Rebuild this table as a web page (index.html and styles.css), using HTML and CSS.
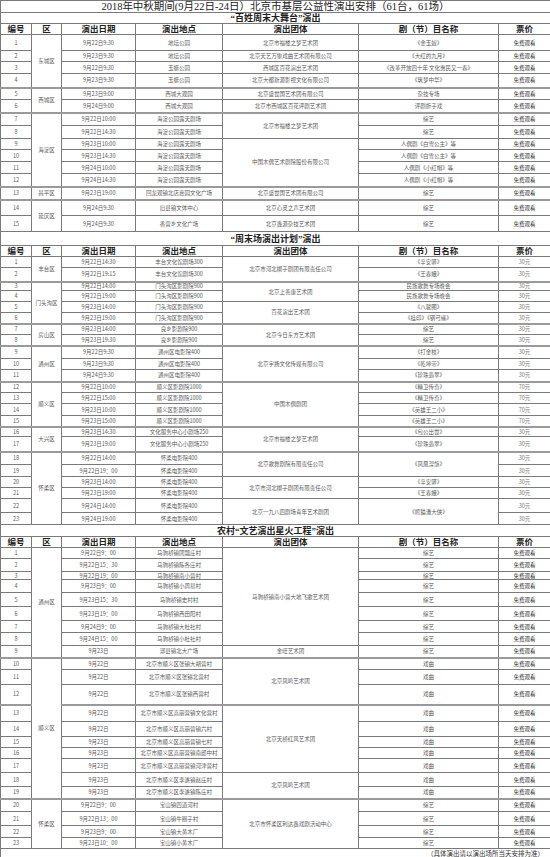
FILE: index.html
```html
<!DOCTYPE html>
<html lang="zh-CN">
<head>
<meta charset="utf-8">
<title>2018年中秋期间北京市基层公益性演出安排</title>
<link rel="stylesheet" href="styles.css">
</head>
<body>
<table class="t">
<colgroup>
<col class="c1"><col class="c2"><col class="c3"><col class="c4"><col class="c5"><col class="c6"><col class="c7">
</colgroup>
<tbody>
<tr class="h12"><td class="title" colspan="7">2018年中秋期间(9月22日-24日）北京市基层公益性演出安排（61台，61场）</td></tr>
<tr class="h11"><td class="sec" colspan="7">“百姓周末大舞台”演出</td></tr>
<tr class="h11 hd"><th>编号</th><th>区</th><th>演出日期</th><th>演出地点</th><th>演出团体</th><th>剧（节）目名称</th><th>票价</th></tr>

<tr class="h16"><td>1</td><td rowspan="4">东城区</td><td>9月22日9:30</td><td>地坛公园</td><td>北京市福楼之梦艺术团</td><td>《金玉奴》</td><td class="p">免费观看</td></tr>
<tr class="h11"><td>2</td><td>9月23日9:30</td><td>地坛公园</td><td>北京天艺万象戏曲艺术团有限公司</td><td>《大红的九月》</td><td class="p">免费观看</td></tr>
<tr class="h12"><td>3</td><td>9月22日9:30</td><td>玉蜓公园</td><td>西城区百花演出艺术团</td><td>《改革开放四十年 文化惠民又一春》</td><td class="p">免费观看</td></tr>
<tr class="h14"><td>4</td><td>9月23日9:30</td><td>玉蜓公园</td><td>北京大都新源影视文化有限公司</td><td>《筑梦中华》</td><td class="p">免费观看</td></tr>
<tr class="h12 g"><td>5</td><td rowspan="2">西城区</td><td>9月23日9:00</td><td>西城大观园</td><td>北京盛世国艺术团有限公司</td><td>杂技专场</td><td class="p">免费观看</td></tr>
<tr class="h13"><td>6</td><td>9月24日9:00</td><td>西城大观园</td><td>北京市西城区百花评剧艺术团</td><td>评剧折子戏</td><td class="p">免费观看</td></tr>
<tr class="h13 g"><td>7</td><td rowspan="6">海淀区</td><td>9月22日10:00</td><td>海淀公园露天剧场</td><td rowspan="2">北京市福楼之梦艺术团</td><td>综艺</td><td class="p">免费观看</td></tr>
<tr class="h13"><td>8</td><td>9月22日14:30</td><td>海淀公园露天剧场</td><td>综艺</td><td class="p">免费观看</td></tr>
<tr class="h11"><td>9</td><td>9月23日10:00</td><td>海淀公园露天剧场</td><td rowspan="4">中国木偶艺术剧院股份有限公司</td><td>人偶剧《白雪公主》等</td><td class="p">免费观看</td></tr>
<tr class="h12"><td>10</td><td>9月23日14:30</td><td>海淀公园露天剧场</td><td>人偶剧《白雪公主》等</td><td class="p">免费观看</td></tr>
<tr class="h12"><td>11</td><td>9月24日10:00</td><td>海淀公园露天剧场</td><td>人偶剧《小红帽》等</td><td class="p">免费观看</td></tr>
<tr class="h13"><td>12</td><td>9月24日14:30</td><td>海淀公园露天剧场</td><td>人偶剧《小红帽》等</td><td class="p">免费观看</td></tr>
<tr class="h13 g"><td>13</td><td>昌平区</td><td>9月23日19:00</td><td>回龙观镇北店嘉园文化广场</td><td>北京盛世国艺术团有限公司</td><td>综艺</td><td class="p">免费观看</td></tr>
<tr class="h16 g"><td>14</td><td rowspan="2">延庆区</td><td>9月24日9:30</td><td>旧县镇文体中心</td><td>北京心灵之声艺术团</td><td>综艺</td><td class="p">免费观看</td></tr>
<tr class="h16"><td>15</td><td>9月24日9:30</td><td>香营乡文化广场</td><td>北京鑫源杂技艺术团</td><td>综艺</td><td class="p">免费观看</td></tr>

<tr class="h14"><td class="sec" colspan="7">“周末场演出计划”演出</td></tr>
<tr class="h11 hd"><th>编号</th><th>区</th><th>演出日期</th><th>演出地点</th><th>演出团体</th><th>剧（节）目名称</th><th>票价</th></tr>

<tr class="h11"><td>1</td><td rowspan="2">丰台区</td><td>9月22日14:30</td><td>丰台文化馆剧场300</td><td rowspan="2">北京市河北梆子剧团有限责任公司</td><td>《辛安驿》</td><td class="y">30元</td></tr>
<tr class="h14"><td>2</td><td>9月22日19:15</td><td>丰台文化馆剧场300</td><td>《王春娥》</td><td class="y">30元</td></tr>
<tr class="h9 g"><td>3</td><td rowspan="4">门头沟区</td><td>9月22日14:00</td><td>门头沟区影剧院900</td><td rowspan="2">北京上善康艺术团</td><td>民族歌舞专场晚会</td><td class="y">30元</td></tr>
<tr class="h11"><td>4</td><td>9月22日19:00</td><td>门头沟区影剧院900</td><td>民族歌舞专场晚会</td><td class="y">30元</td></tr>
<tr class="h11"><td>5</td><td>9月23日14:00</td><td>门头沟区影剧院900</td><td rowspan="2">百花演出艺术团</td><td>《八骏图》</td><td class="y">30元</td></tr>
<tr class="h11"><td>6</td><td>9月23日19:00</td><td>门头沟区影剧院900</td><td>《挂印》《钢弓缘》</td><td class="y">30元</td></tr>
<tr class="h11 g"><td>7</td><td rowspan="2">房山区</td><td>9月23日14:00</td><td>良乡影剧院900</td><td rowspan="2">北京今日东方艺术团</td><td>综艺</td><td class="y">30元</td></tr>
<tr class="h11"><td>8</td><td>9月23日19:30</td><td>良乡影剧院900</td><td>综艺</td><td class="y">30元</td></tr>
<tr class="h13 g"><td>9</td><td rowspan="3">通州区</td><td>9月22日9:30</td><td>通州区电影院400</td><td rowspan="3">北京宇扬文化传媒有限公司</td><td>《打金枝》</td><td class="y">30元</td></tr>
<tr class="h11"><td>10</td><td>9月23日9:30</td><td>通州区电影院400</td><td>《乾坤带》</td><td class="y">30元</td></tr>
<tr class="h12"><td>11</td><td>9月24日9:30</td><td>通州区电影院400</td><td>《珍珠翡翠》</td><td class="y">30元</td></tr>
<tr class="h11 g"><td>12</td><td rowspan="4">顺义区</td><td>9月22日10:00</td><td>顺义区影剧院1000</td><td rowspan="4">中国木偶剧团</td><td>《精卫传奇》</td><td class="y">70元</td></tr>
<tr class="h11"><td>13</td><td>9月22日15:00</td><td>顺义区影剧院1000</td><td>《精卫传奇》</td><td class="y">70元</td></tr>
<tr class="h12"><td>14</td><td>9月23日10:00</td><td>顺义区影剧院1000</td><td>《英雄王二小》</td><td class="y">70元</td></tr>
<tr class="h11"><td>15</td><td>9月23日15:00</td><td>顺义区影剧院1000</td><td>《英雄王二小》</td><td class="y">70元</td></tr>
<tr class="h10 g"><td>16</td><td rowspan="2">大兴区</td><td>9月23日14:30</td><td>文化服务中心小剧场250</td><td rowspan="2">北京市福楼之梦艺术团</td><td>《包公出世》</td><td class="y">30元</td></tr>
<tr class="h15"><td>17</td><td>9月23日19:00</td><td>文化服务中心小剧场250</td><td>《珍珠翡翠》</td><td class="y">30元</td></tr>
<tr class="h13 g"><td>18</td><td rowspan="6">怀柔区</td><td>9月22日14:00</td><td>怀柔电影院400</td><td rowspan="2">北京歌舞剧院有限责任公司</td><td rowspan="2">《凤凰涅槃》</td><td class="y">30元</td></tr>
<tr class="h12"><td>19</td><td>9月22日19：00</td><td>怀柔电影院400</td><td class="y">30元</td></tr>
<tr class="h11"><td>20</td><td>9月23日14:00</td><td>怀柔电影院400</td><td rowspan="2">北京市河北梆子剧团有限责任公司</td><td>《辛安驿》</td><td class="y">30元</td></tr>
<tr class="h11"><td>21</td><td>9月23日19:00</td><td>怀柔电影院400</td><td>《王春娥》</td><td class="y">30元</td></tr>
<tr class="h14"><td>22</td><td>9月24日14:00</td><td>怀柔电影院400</td><td rowspan="2">北京一九八四剧场青年艺术剧团</td><td rowspan="2">《熊猫潘大侠》</td><td class="y">30元</td></tr>
<tr class="h12"><td>23</td><td>9月24日19:00</td><td>怀柔电影院400</td><td class="y">30元</td></tr>

<tr class="h12"><td class="sec" colspan="7">农村“文艺演出星火工程”演出</td></tr>
<tr class="h11 hd"><th>编号</th><th>区</th><th>演出日期</th><th>演出地点</th><th>演出团体</th><th>剧（节）目名称</th><th>票价</th></tr>

<tr class="h11"><td>1</td><td rowspan="9">通州区</td><td>9月22日9：00</td><td>马驹桥镇团瓢庄村</td><td rowspan="8">马驹桥镇南小营大地飞歌艺术团</td><td>综艺</td><td class="p">免费观看</td></tr>
<tr class="h13"><td>2</td><td>9月22日15：30</td><td>马驹桥镇陈各庄村</td><td>综艺</td><td class="p">免费观看</td></tr>
<tr class="h8"><td>3</td><td>9月22日19：00</td><td>马驹桥镇南小营村</td><td>综艺</td><td class="p">免费观看</td></tr>
<tr class="h13"><td>4</td><td>9月23日9：00</td><td>马驹桥镇小周易村</td><td>综艺</td><td class="p">免费观看</td></tr>
<tr class="h14"><td>5</td><td>9月23日15：30</td><td>马驹桥镇史村村</td><td>综艺</td><td class="p">免费观看</td></tr>
<tr class="h14"><td>6</td><td>9月23日19：00</td><td>马驹桥镇西田阳村</td><td>综艺</td><td class="p">免费观看</td></tr>
<tr class="h12"><td>7</td><td>9月24日9：00</td><td>马驹桥镇大杜社村</td><td>综艺</td><td class="p">免费观看</td></tr>
<tr class="h13"><td>8</td><td>9月24日15：00</td><td>马驹桥镇小杜社村</td><td>综艺</td><td class="p">免费观看</td></tr>
<tr class="h12"><td>9</td><td>9月23日</td><td>漷县镇北大广场</td><td>金旺艺术团</td><td>综艺</td><td class="p">免费观看</td></tr>
<tr class="h12 g"><td>10</td><td rowspan="10">顺义区</td><td>9月22日</td><td>北京市顺义区张镇大胡营村</td><td rowspan="3">北京凤鸣艺术团</td><td>戏曲</td><td class="p">免费观看</td></tr>
<tr class="h15"><td>11</td><td>9月22日</td><td>北京市顺义区张镇北营村</td><td>戏曲</td><td class="p">免费观看</td></tr>
<tr class="h20"><td>12</td><td>9月22日</td><td>北京市顺义区张镇西营村</td><td>戏曲</td><td class="p">免费观看</td></tr>
<tr class="h17 g2"><td>13</td><td>9月22日</td><td>北京市顺义区高丽营镇文化营村</td><td rowspan="5">北京天桥红风艺术团</td><td>戏曲</td><td class="p">免费观看</td></tr>
<tr class="h15"><td>14</td><td>9月22日</td><td>北京市顺义区高丽营镇六村</td><td>戏曲</td><td class="p">免费观看</td></tr>
<tr class="h11"><td>15</td><td>9月23日</td><td>北京市顺义区高丽营镇七村</td><td>戏曲</td><td class="p">免费观看</td></tr>
<tr class="h11"><td>16</td><td>9月23日</td><td>北京市顺义区高丽营镇南郎中村</td><td>戏曲</td><td class="p">免费观看</td></tr>
<tr class="h14"><td>17</td><td>9月23日</td><td>北京市顺义区高丽营镇河津营村</td><td>戏曲</td><td class="p">免费观看</td></tr>
<tr class="h14"><td>18</td><td>9月23日</td><td>北京市顺义区李遂镇赵庄村</td><td rowspan="2">北京凤鸣艺术团</td><td>戏曲</td><td class="p">免费观看</td></tr>
<tr class="h12"><td>19</td><td>9月23日</td><td>北京市顺义区李遂镇陈庄村</td><td>戏曲</td><td class="p">免费观看</td></tr>
<tr class="h13 g"><td>20</td><td rowspan="4">怀柔区</td><td>9月22日9：00</td><td>宝山镇四道河村</td><td rowspan="4">北京市怀柔区利达鑫戏剧活动中心</td><td>综艺</td><td class="p">免费观看</td></tr>
<tr class="h14"><td>21</td><td>9月22日13：00</td><td>宝山镇牛圈子村</td><td>综艺</td><td class="p">免费观看</td></tr>
<tr class="h12"><td>22</td><td>9月23日9：00</td><td>宝山镇大黄木厂</td><td>综艺</td><td class="p">免费观看</td></tr>
<tr class="h11"><td>23</td><td>9月23日10：00</td><td>宝山镇小黄木厂</td><td>综艺</td><td class="p">免费观看</td></tr>
<tr class="h9"><td class="note" colspan="7">（具体演出请以演出场所当天安排为准）</td></tr>
</tbody>
</table>
</body>
</html>
```
FILE: styles.css
```css
html, body {
  margin: 0;
  padding: 0;
  background: #ffffff;
}

.t {
  border-collapse: collapse;
  table-layout: fixed;
  width: 550px;
  font-family: "Noto Sans CJK SC", "Noto Sans", sans-serif;
  font-size: 5.5px;
  color: #5a5a5a;
}

.c1 { width: 31px; }
.c2 { width: 30px; }
.c3 { width: 74px; }
.c4 { width: 87px; }
.c5 { width: 136px; }
.c6 { width: 140px; }
.c7 { width: 52px; }

.t td,
.t th {
  border: 1px solid #7a7a7a;
  padding: 0;
  text-align: center;
  vertical-align: middle;
  line-height: 6px;
  white-space: nowrap;
  overflow: hidden;
}

.t .title {
  font-family: "Liberation Serif", "Noto Sans CJK SC", serif;
  font-size: 10.5px;
  line-height: 11px;
  color: #222222;
}

.t .sec {
  font-family: "Liberation Serif", "Noto Sans CJK SC", serif;
  font-size: 9px;
  line-height: 10px;
  font-weight: bold;
  color: #222222;
}

.hd th {
  font-family: "Liberation Serif", "Noto Sans CJK SC", serif;
  font-size: 8.5px;
  line-height: 9px;
  font-weight: bold;
  color: #222222;
}

.t .p {
  color: #333333;
}

.t .y {
  color: #777777;
}

.t .note {
  text-align: right;
  padding-right: 6px;
  font-size: 6.5px;
  line-height: 7px;
  color: #333333;
}

.g td {
  border-top: 2px solid #9a9a9a;
}

.g2 td {
  border-top: 2px solid #9a9a9a;
}

.h8 { height: 8px; }
.h9 { height: 9px; }
.h10 { height: 10px; }
.h11 { height: 11px; }
.h12 { height: 12px; }
.h13 { height: 13px; }
.h14 { height: 14px; }
.h15 { height: 15px; }
.h16 { height: 16px; }
.h17 { height: 17px; }
.h20 { height: 20px; }
```
